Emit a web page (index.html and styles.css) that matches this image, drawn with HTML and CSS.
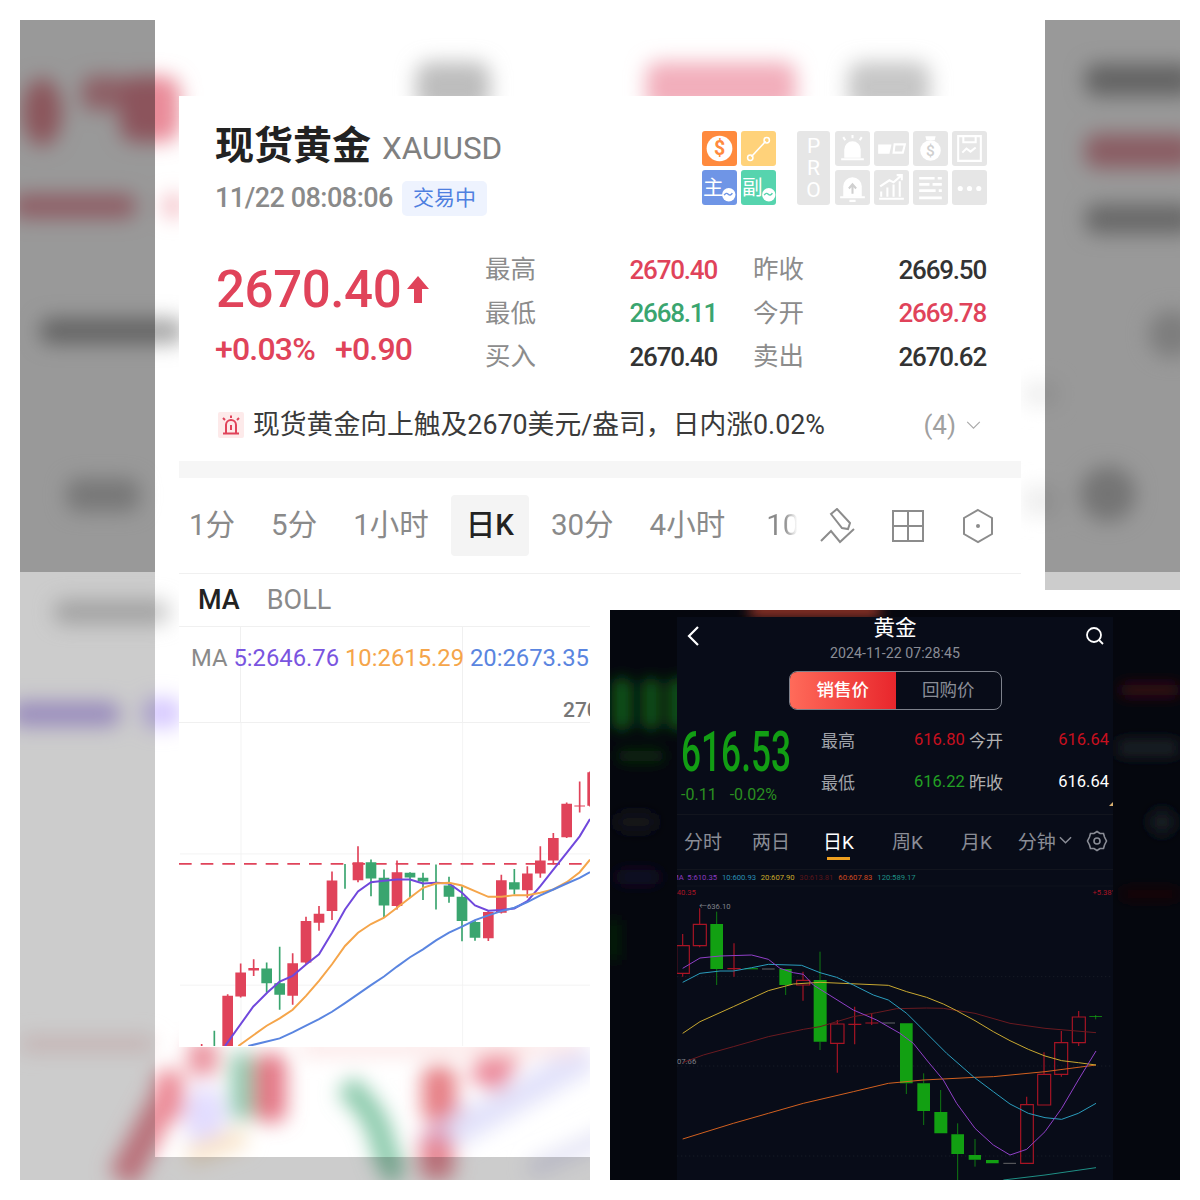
FILE: index.html

```html
<!DOCTYPE html>
<html lang="zh-CN">
<head>
  <meta charset="UTF-8" />
  <title>现货黄金 XAUUSD</title>
  <link rel="stylesheet" href="styles.css">
</head>
<body>
<div class="canvas">

  <!-- blurred, dimmed backdrop -->
  <svg class="backdrop" viewBox="0 0 1200 1200" aria-hidden="true">
    <defs>
      <filter id="smear" x="-10%" y="-10%" width="120%" height="120%"><feGaussianBlur stdDeviation="10"/></filter>
      <clipPath id="frame"><rect x="20" y="20" width="1160" height="1160"/></clipPath>
    </defs>
    <g clip-path="url(#frame)">
      <g filter="url(#smear)">
        <!-- top strip -->
        <rect x="416" y="62" width="74" height="50" rx="14" fill="#bdbdbd"/>
        <rect x="646" y="62" width="150" height="50" rx="12" fill="#f2aebb"/>
        <rect x="848" y="62" width="82" height="50" rx="14" fill="#c6c6c6"/>
        <!-- left side -->
        <ellipse cx="42" cy="112" rx="20" ry="34" fill="#e88e98"/>
        <rect x="82" y="76" width="44" height="34" rx="10" fill="#ec9fa9"/>
        <rect x="120" y="76" width="60" height="66" rx="16" fill="#e98b99"/>
        <rect x="12" y="194" width="124" height="24" rx="10" fill="#ec9aa6"/>
        <rect x="164" y="194" width="18" height="24" rx="8" fill="#f3b6be"/>
        <rect x="40" y="318" width="144" height="26" rx="10" fill="#a8a8a8"/>
        <rect x="66" y="478" width="74" height="34" rx="12" fill="#c8c8c8"/>
        <rect x="54" y="600" width="116" height="24" rx="10" fill="#cbcbcb"/>
        <rect x="10" y="702" width="110" height="24" rx="10" fill="#bdaceb"/>
        <rect x="142" y="698" width="40" height="30" rx="12" fill="#d6c8ff"/>
        <rect x="20" y="1036" width="135" height="16" rx="6" fill="#f5e0e0"/>
        <!-- right side -->
        <rect x="1085" y="64" width="110" height="32" rx="12" fill="#a6a6a6"/>
        <rect x="1085" y="134" width="110" height="34" rx="12" fill="#e69aa4"/>
        <rect x="1085" y="204" width="110" height="30" rx="12" fill="#aeaeae"/>
        <circle cx="1172" cy="334" r="24" fill="#d0d0d0"/>
        <circle cx="1108" cy="494" r="28" fill="#c2c2c2"/>
        <!-- bottom strip -->
        <path d="M168 1095 122 1180" stroke="#e88c98" stroke-width="30" fill="none"/>
        <rect x="154" y="1070" width="30" height="50" rx="10" fill="#ec8c98"/>
        <rect x="188" y="1040" width="30" height="36" rx="10" fill="#ea919d"/>
        <rect x="230" y="1052" width="24" height="68" rx="8" fill="#92ccb2"/>
        <rect x="254" y="1054" width="32" height="68" rx="10" fill="#e47484"/>
        <ellipse cx="205" cy="1118" rx="20" ry="32" fill="#e2dcff"/>
        <path d="M345 1085Q375 1110 382 1140T400 1176" stroke="#86c8a8" stroke-width="24" fill="none"/>
        <path d="M470 1112 424 1150" stroke="#d09ac8" stroke-width="24" fill="none"/>
        <rect x="420" y="1136" width="34" height="44" rx="10" fill="#e68692"/>
        <rect x="422" y="1066" width="34" height="56" rx="10" fill="#e67e84"/>
        <path d="M505 1048 484 1086" stroke="#ec889a" stroke-width="36" fill="none"/>
        <path d="M590 1055 450 1135" stroke="#e2e2fa" stroke-width="30" fill="none"/>
        <path d="M188 1156 245 1136" stroke="#f9e4c8" stroke-width="20" fill="none"/>
        <rect x="300" y="1040" width="280" height="16" fill="#fce6e6"/>
        <path d="M620 1130 530 1170" stroke="#e2e2f4" stroke-width="16" fill="none"/>
        <!-- pale smudges beside the card -->
        <rect x="1024" y="382" width="34" height="24" fill="#efefef"/>
        <rect x="1024" y="486" width="34" height="30" fill="#eeeeee"/>
      </g>
      <path class="shade-dark" d="M20 20H155V572H20ZM1045 20H1180V572H1045Z"/>
      <path class="shade-light" d="M20 572H155V1157H590V1180H20ZM1045 572H1180V590H1045Z"/>
    </g>
  </svg>

  <!-- light quote card -->
  <section class="quote-card">
    <header class="quote-head">
      <div>
        <div class="title-row">
          <h1>现货黄金</h1>
          <span class="symbol">XAUUSD</span>
        </div>
        <div class="time-row">
          <span class="time">11/22 08:08:06</span>
          <span class="badge">交易中</span>
        </div>
      </div>
      <div class="tool-icons">
        <div class="icon-grid">
          <svg class="tile tile-orange" viewBox="0 0 34 34"><circle cx="17" cy="17" r="12.5" fill="#fff"/><text x="17" y="23" class="tile-dollar">$</text></svg>
          <svg class="tile tile-yellow" viewBox="0 0 34 34"><path d="M10 25 24 10" stroke="#fff" stroke-width="1.6"/><circle cx="9" cy="26" r="2.6" class="ring"/><circle cx="25" cy="9" r="2.6" class="ring"/></svg>
          <svg class="tile tile-blue" viewBox="0 0 34 34"><text x="1" y="24" class="tile-char">主</text><circle cx="26" cy="24" r="6.500" fill="#fff"/><path d="M21.500 24.500q2-3 4-1t4-1" class="wave"/></svg>
          <svg class="tile tile-teal" viewBox="0 0 34 34"><text x="1" y="24" class="tile-char">副</text><circle cx="27" cy="24" r="6.500" fill="#fff"/><path d="M22.500 24.500q2-3 4-1t4-1" class="wave-teal"/></svg>
        </div>
        <div class="pro-grid">
          <div class="pro-tile"><span>P</span><span>R</span><span>O</span></div>
          <svg class="tile tile-gray" viewBox="0 0 34 34"><path d="M9 26V18a8 8 0 0 1 16 0v8zM6 27.500h22" class="fill-white"/><path d="M6 27.500h22M17 4v3M8 6l2 3M26 6l-2 3" class="line-white"/></svg>
          <svg class="tile tile-gray" viewBox="0 0 34 34"><path d="M4 13h13l-2 9H4z" fill="#fff"/><path d="M20 13h10l-2 8h-9z" class="line-white"/></svg>
          <svg class="tile tile-gray" viewBox="0 0 34 34"><circle cx="17" cy="19" r="10" fill="#fff"/><path d="M13 9l-1-4h10l-1 4z" fill="#fff"/><text x="17" y="24" class="tile-money">$</text></svg>
          <svg class="tile tile-gray" viewBox="0 0 34 34"><path d="M6 5h22v24H6z" class="line-white"/><path d="M11 5v6h12V5" class="line-white"/><path d="M10 21l4-4 4 3 5-4" class="line-white"/></svg>
          <svg class="tile tile-gray" viewBox="0 0 34 34"><path d="M8 26V16a9 9 0 0 1 18 0v10z" fill="#fff"/><path d="M5 26.500h24M14 30h6" class="line-white"/><path d="M17 23v-8M13.500 18l3.500-4 3.500 4" class="line-gray"/></svg>
          <svg class="tile tile-gray" viewBox="0 0 34 34"><path d="M5 28h24M7 26v-5M13 26v-9M19 26v-12M25 26v-15M6 16l9-6 4 2 8-7M22 5h5v5" class="line-white"/></svg>
          <svg class="tile tile-gray" viewBox="0 0 34 34"><path d="M6 8h15M24 8h4M6 14h10M19 14h9M6 20h16M25 20h3M6 27h22" class="line-white-thick"/></svg>
          <svg class="tile tile-gray" viewBox="0 0 34 34"><circle cx="8" cy="18" r="2.500" fill="#fff"/><circle cx="17" cy="18" r="2.500" fill="#fff"/><circle cx="26" cy="18" r="2.500" fill="#fff"/></svg>
        </div>
      </div>
    </header>

    <div class="quote-main">
      <div class="price-block">
        <div class="price-row">
          <span class="price">2670.40</span>
          <svg class="price-arrow" viewBox="0 0 22 27"><path d="M11 0 22 13H15V27H7V13H0Z"/></svg>
        </div>
        <div class="change-row"><span>+0.03%</span><span>+0.90</span></div>
      </div>
      <div class="stat-grid">
        <div class="stat"><span>最高</span><b class="up">2670.40</b></div>
        <div class="stat"><span>昨收</span><b>2669.50</b></div>
        <div class="stat"><span>最低</span><b class="down">2668.11</b></div>
        <div class="stat"><span>今开</span><b class="up">2669.78</b></div>
        <div class="stat"><span>买入</span><b>2670.40</b></div>
        <div class="stat"><span>卖出</span><b>2670.62</b></div>
      </div>
    </div>

    <div class="alert-row">
      <svg class="alert-icon" viewBox="0 0 26 26"><rect width="26" height="26" rx="2" fill="#fdeaea"/><path d="M8 21V13a5 5 0 0 1 10 0v8M5 21.500h16M13 13v5M13 3.500v2.500M5 6l2 2M21 6l-2 2" fill="none" stroke="#e0435a" stroke-width="2"/></svg>
      <span class="alert-text">现货黄金向上触及2670美元/盎司，日内涨0.02%</span>
      <span class="alert-count">(4)</span>
      <svg class="alert-chevron" viewBox="0 0 16 10"><path d="M1 1 8 8 15 1" fill="none" stroke="#aaa" stroke-width="1.300"/></svg>
    </div>

    <div class="band"></div>

    <nav class="period-row">
      <div class="period-tabs">
        <span class="tab">1分</span>
        <span class="tab">5分</span>
        <span class="tab">1小时</span>
        <span class="tab tab-active">日K</span>
        <span class="tab">30分</span>
        <span class="tab">4小时</span>
        <span class="tab tab-fade">10</span>
      </div>
      <div class="period-tools">
        <svg viewBox="0 0 36 36"><path d="M11 5 17 0 30 14 28 20 22 19ZM1 32 11 22 20 33 34 20" transform="translate(0 1)" fill="none" stroke="#8c8c8c" stroke-width="2"/></svg>
        <svg viewBox="0 0 36 36"><path d="M3 3H33V33H3ZM18 3V33M3 18H33" fill="none" stroke="#8c8c8c" stroke-width="2"/></svg>
        <svg viewBox="0 0 36 36"><path d="M18 2 32 10V26L18 34 4 26V10Z" fill="none" stroke="#8c8c8c" stroke-width="2"/><circle cx="18" cy="18" r="2" fill="#8c8c8c"/></svg>
      </div>
    </nav>

    <div class="indicator-row"><b>MA</b><span>BOLL</span></div>

    <div class="plot">
      <div class="ma-legend">
        <p><span class="ma-gray">MA</span> <span class="ma-purple">5:2646.76</span> <span class="ma-orange">10:2615.29</span> <span class="ma-blue">20:2673.35</span></p>
        <span class="axis-label">2700</span>
      </div>
      <svg class="candles" viewBox="-3 -21 1233 972" preserveAspectRatio="none">
        <path d="M183-21V951M848-21V951" class="grid-line"/>
        <path d="M0 373H1230M0 768H1230" class="grid-line"/>
        <path d="M-3 403H1230" class="last-price"/>
        <path d="M65 945V951M143 795V951M182 703V805M221 690V740M338 672V827M378 562V705M417 530V604M456 426V572M534 350V458M651 393V540M925 545V635M964 436V552M1042 410V505M1081 350V445M1120 310V405M1160 218V325M1199 155V248M1230 125V230" class="wick-up"/>
        <path d="M127 800h32v151h-32zM166 730h32v72h-32zM205 716h32v8h-32zM322 702h32v98h-32zM362 575h32v125h-32zM401 553h32v27h-32zM440 453h32v92h-32zM518 398h32v54h-32zM635 428h32v102h-32zM909 548h32v79h-32zM948 452h32v98h-32zM1026 432h32v50h-32zM1065 393h32v39h-32zM1104 325h32v68h-32zM1144 222h32v101h-32zM1183 227h32v3h-32zM1222 127h16v101h-16z" class="body-up"/>
        <path d="M103 905V951M260 700V790M299 652V842M495 403V478M573 390V500M612 420V563M690 428V505M729 430V512M768 405V540M807 442V520M846 470V636M885 575V634M1003 418V495" class="wick-down"/>
        <path d="M244 718h32v44h-32zM283 762h32v35h-32zM557 398h32v49h-32zM596 445h32v83h-32zM674 430h32v14h-32zM713 445h32v11h-32zM791 468h32v34h-32zM830 502h32v73h-32zM869 578h32v47h-32zM987 458h32v22h-32z" class="body-down"/>
        <polyline class="ma-line ma5" points="135,951 220,832 262,790 299,757 338,740 378,706 417,675 456,610 495,540 534,486 573,458 612,454 651,450 690,450 729,462 768,460 807,462 846,490 885,528 925,544 964,542 1003,537 1042,515 1081,470 1120,420 1160,370 1199,320 1230,268"/>
        <polyline class="ma-line ma10" points="175,951 260,890 299,868 338,842 378,800 417,755 456,705 495,650 534,610 573,584 612,565 651,535 690,505 729,475 768,462 807,460 846,468 885,485 925,502 964,502 1003,497 1042,497 1081,490 1120,480 1160,458 1199,428 1230,390"/>
        <polyline class="ma-line ma20" points="205,951 299,928 338,910 378,890 417,870 456,848 495,822 534,795 573,768 612,742 651,712 690,684 729,660 768,633 807,610 846,592 885,572 925,558 964,545 1003,535 1042,518 1081,498 1120,480 1160,462 1199,445 1230,428"/>
      </svg>
    </div>
  </section>

  <!-- dark gold quote screenshot -->
  <aside class="dark-frame">
    <div class="dark-shot">
      <svg class="dark-smear" viewBox="0 0 570 570" aria-hidden="true">
        <defs><filter id="smear-dark" x="-20%" y="-20%" width="140%" height="140%"><feGaussianBlur stdDeviation="7"/></filter></defs>
        <g filter="url(#smear-dark)">
          <rect x="140" y="-6" width="130" height="12" fill="#b9402e"/>
          <rect x="2" y="68" width="20" height="52" rx="8" fill="#0d5216"/>
          <rect x="32" y="68" width="18" height="52" rx="8" fill="#0d5216"/>
          <rect x="58" y="68" width="20" height="52" rx="8" fill="#0d5216"/>
          <rect x="8" y="140" width="46" height="12" rx="5" fill="#0a2e10"/>
          <rect x="6" y="203" width="40" height="18" rx="8" fill="#16181e"/>
          <rect x="6" y="260" width="44" height="14" rx="6" fill="#15102a"/>
          <rect x="510" y="74" width="60" height="12" rx="5" fill="#3e0d14"/>
          <rect x="506" y="130" width="64" height="16" rx="6" fill="#1f2126"/>
          <circle cx="552" cy="212" r="13" fill="#191b21"/>
          <rect x="510" y="280" width="60" height="8" rx="4" fill="#240a0f"/>
          <rect x="0" y="310" width="8" height="40" fill="#0a2c10"/>
        </g>
      </svg>
      <div class="dark-inner">
        <header class="dark-top">
          <svg class="dark-back" viewBox="0 0 14 22"><path d="M12 2 3 11 12 20" fill="none" stroke="#fff" stroke-width="2.200"/></svg>
          <div class="dark-title">
            <strong>黄金</strong>
            <span>2024-11-22 07:28:45</span>
          </div>
          <svg class="dark-search" viewBox="0 0 20 20"><circle cx="9" cy="9" r="7" fill="none" stroke="#fff" stroke-width="1.800"/><path d="M14 14 18 18" stroke="#fff" stroke-width="1.800"/></svg>
        </header>
        <div class="segment">
          <span class="segment-on">销售价</span>
          <span>回购价</span>
        </div>
        <div class="dark-quote">
          <div class="dark-price">
            <span class="dark-big">616.53</span>
            <div class="dark-change"><span>-0.11</span><span>-0.02%</span></div>
          </div>
          <div class="dark-stats">
            <span class="dark-label">最高</span><span class="dark-red">616.80</span><span class="dark-label2">今开</span><span class="dark-value dark-red">616.64</span>
            <span class="dark-label">最低</span><span class="dark-green">616.22</span><span class="dark-label2">昨收</span><span class="dark-value dark-white">616.64</span>
          </div>
          <i class="corner-mark"></i>
        </div>
        <nav class="dark-tabs">
          <span>分时</span>
          <span>两日</span>
          <span class="dark-tab-on">日K</span>
          <span>周K</span>
          <span>月K</span>
          <span class="dark-tab-min">分钟<svg viewBox="0 0 14 9"><path d="M1 1 7 7 13 1" fill="none" stroke="#8a8d96" stroke-width="1.600"/></svg></span>
          <svg class="dark-gear" viewBox="0 0 22 22"><path d="M11 1.500 14 3.500 17.500 3.500 18.500 7 20.500 11 18.500 15 17.500 18.500 14 18.500 11 20.500 8 18.500 4.500 18.500 3.500 15 1.500 11 3.500 7 4.500 3.500 8 3.500Z" fill="none" stroke="#8a8d96" stroke-width="1.600"/><circle cx="11" cy="11" r="3" fill="none" stroke="#8a8d96" stroke-width="1.600"/></svg>
        </nav>
        <svg class="dark-chart" viewBox="21 0 1308 930" preserveAspectRatio="none">
          <text y="31" class="dark-legend"><tspan x="6" class="l-purple">MA</tspan><tspan x="52" class="l-purple">5:610.35</tspan><tspan x="156" class="l-cyan">10:600.93</tspan><tspan x="272" class="l-yellow">20:607.90</tspan><tspan x="388" class="l-maroon">30:613.81</tspan><tspan x="505" class="l-orange">60:607.83</tspan><tspan x="622" class="l-teal">120:589.17</tspan></text>
          <path d="M21 48H1329" class="dark-rule"/>
          <path d="M21 320H1329M21 588H1329M21 858H1329" class="dark-dots"/>
          <text x="20" y="75" class="dark-axis dark-axis-red">40.35</text>
          <text x="1329" y="75" class="dark-axis dark-axis-red dark-end">+5.38'</text>
          <text x="88" y="118" class="dark-axis dark-axis-gray">←636.10</text>
          <text x="21" y="582" class="dark-axis dark-axis-gray">07.66</text>

          <path d="M20 227h38v83h-38zM38 192v35M38 310v10M70 163h39v64h-39zM89 115v48M89 227v5M172 296h40M192 220v100M380 331h39v14h-39zM399 305v26M399 345v47M482 462h40v58h-40zM502 450v12M502 520v88M535 463h39M554 410v113M586 459h39M605 430v35M1052 704h38v176h-38zM1070 680v24M1103 613h39v92h-39zM1122 547v66M1154 518h39v95h-39zM1174 483v35M1174 613v7M1207 441h39v77h-39zM1226 423v18M1226 518v10" class="d-up"/>
          <path d="M140 125v37M140 297v48M347 345v30M450 245v85M450 515v25M709 640v32M761 610v30M761 723v42M812 660v66M863 760v33M863 852v78M915 807v48M915 869v21M1277 435v13" class="d-wick-down"/>
          <path d="M121 162h38v135h-38zM328 297h37v48h-37zM431 330h39v185h-39zM690 460h38v180h-38zM742 640h38v83h-38zM793 726h39v64h-39zM844 793h38v59h-38zM896 855h37v14h-37zM948 870h38v10h-38zM224 295h40v3h-40zM1258 439h38v2h-38z" class="d-down"/>
          <path d="M276 297h38M637 459h38M1000 880h38" class="d-doji"/>

          <polyline class="d-line d-maroon" points="38,578 100,555 190,530 295,500 400,478 450,470 550,440 620,428 680,416 770,414 820,415 915,430 1020,460 1125,475 1278,488"/>
          <polyline class="d-line d-orange" points="38,807 190,760 295,730 400,700 550,665 655,640 760,630 915,622 970,620 1125,605 1278,585"/>
          <polyline class="d-line d-teal" points="1000,930 1125,915 1278,893"/>
          <polyline class="d-line d-yellow" points="38,490 90,455 190,410 295,362 370,342 450,337 655,346 710,365 770,382 820,402 860,422 915,452 970,485 1020,512 1075,538 1125,558 1175,572 1225,578 1278,585"/>
          <polyline class="d-line d-cyan" points="38,337 90,310 150,303 190,303 245,293 295,283 395,286 450,308 500,322 550,345 610,375 655,390 710,430 770,490 830,550 910,620 970,665 1020,702 1075,730 1125,743 1175,748 1225,730 1278,700"/>
          <polyline class="d-line d-purple" points="38,295 90,264 150,258 245,255 295,268 330,295 370,308 400,313 430,345 470,370 550,420 620,450 690,490 730,520 770,570 820,630 860,700 915,775 970,825 1020,855 1070,838 1125,785 1175,715 1225,630 1278,543"/>
        </svg>
      </div>
    </div>
  </aside>
</div>
</body>
</html>
```

FILE: styles.css

```css
* { margin: 0; padding: 0; box-sizing: border-box; }
body { background: #fff; font-family: Roboto, "Noto Sans CJK SC", sans-serif; color: #333; }
.canvas { position: relative; width: 1200px; height: 1200px; overflow: hidden; }
svg { display: block; }

/* backdrop */
.backdrop { position: absolute; left: 0; top: 0; width: 1200px; height: 1200px; }
.shade-dark { fill: #999; mix-blend-mode: multiply; }
.shade-light { fill: #ccc; mix-blend-mode: multiply; }

/* light card */
.quote-card { position: absolute; left: 179px; top: 96px; width: 842px; height: 951px; background: #fff; }
.quote-head { height: 151px; padding: 25px 34px 0 36px; display: flex; justify-content: space-between; }
.title-row { display: flex; align-items: center; gap: 11px; height: 50px; }
h1 { font-size: 39px; font-weight: 700; color: #222; line-height: 50px; }
.symbol { font-size: 31.500px; color: #808080; padding-top: 5px; }
.time-row { display: flex; align-items: center; gap: 9px; height: 44px; margin-top: 5px; }
.time { font-size: 27px; font-weight: 500; color: #8a8a8a; letter-spacing: -0.5px; }
.badge { width: 85px; height: 35px; line-height: 34px; text-align: center; background: #eef3fe; border-radius: 5px; color: #4e7fe0; font-size: 21px; }

.tool-icons { display: flex; gap: 21px; padding-top: 10px; }
.icon-grid { display: grid; grid-template-columns: repeat(2, 35px); grid-auto-rows: 35px; gap: 4px; }
.pro-grid { display: grid; grid-template-columns: 34px repeat(4, 35px); grid-auto-rows: 35px; gap: 4px; }
.tile { width: 35px; height: 35px; border-radius: 3px; }
.tile-orange { background: #ff8a3d; }
.tile-yellow { background: #ffd27a; }
.tile-blue { background: #6f95e6; }
.tile-teal { background: #56d4ae; }
.tile-gray { background: #e6e6e6; }
.tile-dollar { font-size: 19px; font-weight: 700; fill: #ff8a3d; text-anchor: middle; }
.tile-money { font-size: 15px; font-weight: 500; fill: #d0d0d0; text-anchor: middle; }
.tile-char { font-size: 20px; fill: #fff; }
.ring { fill: none; stroke: #fff; stroke-width: 1.5; }
.wave { fill: none; stroke: #6f95e6; stroke-width: 1.4; }
.wave-teal { fill: none; stroke: #56d4ae; stroke-width: 1.4; }
.fill-white { fill: #fff; }
.line-white { fill: none; stroke: #fff; stroke-width: 2; }
.line-white-thick { fill: none; stroke: #fff; stroke-width: 2.6; }
.line-gray { fill: none; stroke: #d0d0d0; stroke-width: 2; }
.pro-tile { grid-row: span 2; width: 33px; background: #e6e6e6; border-radius: 3px; color: #fff; font-size: 21px; display: flex; flex-direction: column; align-items: center; justify-content: center; line-height: 21px; gap: 1px; }

.quote-main { height: 142px; padding-left: 37px; display: flex; }
.price-block { width: 269px; }
.price-row { height: 82px; display: flex; align-items: center; gap: 6px; }
.price { font-size: 51px; font-weight: 500; color: #e0435a; letter-spacing: -0.4px; position: relative; top: 1px; }
.price-arrow { width: 22px; height: 27px; fill: #e0435a; margin-top: 2px; }
.change-row { height: 40px; display: flex; align-items: center; gap: 20px; font-size: 32px; font-weight: 500; color: #e0435a; letter-spacing: -0.8px; margin-left: -1px; }
.stat-grid { display: grid; grid-template-columns: 232px 233px; column-gap: 36px; grid-auto-rows: 43.5px; }
.stat { display: flex; justify-content: space-between; align-items: center; font-size: 25.500px; color: #8c8c8c; }
.stat span { line-height: 1; margin-top: 2px; }
.stat b { font-size: 26px; font-weight: 500; color: #333; letter-spacing: -1.2px; padding-top: 2px; }
.stat b.up { color: #e0435a; }
.stat b.down { color: #3aa56f; }

.alert-row { height: 72px; padding-left: 39px; padding-right: 40px; display: flex; align-items: center; }
.alert-icon { width: 26px; height: 26px; margin-right: 9px; }
.alert-text { flex: 1; font-size: 26.800px; color: #3a3a3a; white-space: nowrap; line-height: 1; }
.alert-count { font-size: 26px; color: #a0a0a0; margin-right: 10px; }
.alert-chevron { width: 15px; height: 9px; }

.band { height: 17px; background: #f6f6f6; }

.period-row { height: 96px; display: flex; align-items: center; border-bottom: 1px solid #f0f0f0; padding-right: 25px; }
.period-tabs { flex: 1; display: flex; align-items: center; gap: 6px; margin-left: -5px; overflow: hidden; white-space: nowrap; }
.tab { padding: 0 15px; height: 61px; line-height: 60px; font-size: 29.500px; color: #8a8a8a; }
.tab-active { background: #f4f4f4; border-radius: 4px; color: #222; font-weight: 500; margin: 0 1px; }
.tab-fade { background: linear-gradient(90deg, #8a8a8a 55%, #fff 95%); background-clip: text; -webkit-background-clip: text; color: transparent; padding: 0; margin-left: 20px; }
.period-tools { display: flex; gap: 34px; }
.period-tools svg { width: 36px; height: 36px; }

.indicator-row { height: 53px; padding-left: 19px; display: flex; align-items: center; gap: 27px; font-size: 27px; color: #8a8a8a; border-bottom: 1px solid #f0f0f0; }
.indicator-row b { font-weight: 500; color: #222; }

.plot { width: 411px; overflow: hidden; }
.ma-legend { position: relative; height: 96px; padding: 13px 0 0 12px; border-bottom: 1px solid #f0f0f0; background-image: linear-gradient(#f0f0f0, #f0f0f0), linear-gradient(#f0f0f0, #f0f0f0); background-size: 1px 100%; background-position: 61px 0, 283px 0; background-repeat: no-repeat; }
.ma-legend p { font-size: 23.800px; white-space: nowrap; line-height: 36px; }
.ma-gray { color: #8a8a8a; }
.ma-purple { color: #7a55e0; }
.ma-orange { color: #f5a54a; }
.ma-blue { color: #5a85e0; }
.axis-label { position: absolute; left: 384px; top: 71px; font-size: 21px; font-weight: 500; color: #777; }
.candles { width: 411px; height: 323px; }
.grid-line { fill: none; stroke: #f0f0f0; stroke-width: 2.5; }
.last-price { fill: none; stroke: #e0435a; stroke-width: 5; stroke-dasharray: 38 27; }
.wick-up { fill: none; stroke: #e0435a; stroke-width: 5; }
.body-up { fill: #e0435a; }
.wick-down { fill: none; stroke: #3aa56f; stroke-width: 5; }
.body-down { fill: #3aa56f; }
.ma-line { fill: none; stroke-width: 6; }
.ma5 { stroke: #7048dc; }
.ma10 { stroke: #f5a54a; }
.ma20 { stroke: #5a85e0; }

/* dark screenshot */
.dark-frame { position: absolute; left: 590px; top: 590px; width: 610px; height: 610px; padding: 20px; background: #fff; }
.dark-shot { position: relative; width: 570px; height: 570px; background: #05070e; overflow: hidden; }
.dark-smear { position: absolute; left: 0; top: 0; width: 570px; height: 570px; }
.dark-inner { position: absolute; left: 67px; top: 7px; width: 436px; height: 563px; background: #080c18; overflow: hidden; color: #8a8d96; }
.dark-top { height: 54px; display: flex; justify-content: space-between; align-items: flex-start; padding: 0 8px 0 9px; }
.dark-back { width: 14px; height: 22px; margin-top: 8px; }
.dark-title { display: flex; flex-direction: column; align-items: center; margin-left: 5px; }
.dark-title strong { font-size: 21.500px; font-weight: 400; color: #fff; line-height: 22px; }
.dark-title span { font-size: 14.200px; margin-top: 4px; line-height: 20px; }
.dark-search { width: 20px; height: 20px; margin-top: 9px; }
.segment { margin: 0 0 0 112px; width: 213px; height: 39px; border: 1px solid #7d818b; border-radius: 8px; display: flex; overflow: hidden; font-size: 17.500px; line-height: 37px; text-align: center; }
.segment span { width: 50%; }
.segment .segment-on { background: linear-gradient(90deg, #ff6b5a, #e8262c); color: #fff; font-weight: 500; }

.dark-quote { position: relative; height: 104px; margin-top: 1px; padding-left: 4px; display: flex; border-bottom: 1px solid #12151e; }
.dark-price { width: 140px; }
.dark-big { display: block; font-size: 56px; font-weight: 500; color: #129e14; line-height: 70px; height: 66px; transform: scaleX(0.63); transform-origin: left; white-space: nowrap; margin-top: 6px; }
.dark-change { display: flex; gap: 13px; font-size: 16px; color: #2a8f20; margin-top: 2px; }
.dark-stats { display: grid; grid-template-columns: 93px 51px 38px 106px; grid-auto-rows: 42px; align-items: center; margin-top: 7px; font-size: 16.500px; }
.dark-label { color: #a0a3a9; font-size: 17px; }
.dark-label2 { color: #b0b0b0; font-size: 17px; padding-left: 4px; white-space: nowrap; }
.dark-value { text-align: right; }
.dark-red { color: #c8101f; }
.dark-green { color: #23a024; }
.dark-white { color: #fff; }
.corner-mark { position: absolute; right: 0; bottom: 8px; border-left: 4px solid transparent; border-bottom: 4px solid #d8b070; }

.dark-tabs { position: relative; height: 55px; display: flex; align-items: center; font-size: 19px; border-bottom: 1px solid #12151e; padding: 0 0 4px 7px; }
.dark-tabs span { margin-right: 38px; white-space: nowrap; }
.dark-tabs span:first-child { margin-right: 30px; }
.dark-tabs span:nth-child(2) { margin-right: 33px; }
.dark-tabs span:nth-child(5) { margin-right: 26px; }
.dark-tabs .dark-tab-on { color: #fff; position: relative; }
.dark-tab-on::after { content: ""; position: absolute; left: 4px; bottom: -6px; width: 23px; height: 2.500px; background: #f0a020; }
.dark-tabs .dark-tab-min { display: flex; align-items: center; gap: 3px; margin-right: 0; }
.dark-tab-min svg { width: 13px; height: 9px; }
.dark-gear { position: absolute; left: 409px; top: 15px; width: 22px; height: 22px; }

.dark-chart { width: 436px; height: 310px; }
.dark-legend { font-size: 23px; }
.l-purple { fill: #8a3ac0; }
.l-cyan { fill: #2a8fb5; }
.l-yellow { fill: #c9a92a; }
.l-maroon { fill: #5a1418; }
.l-orange { fill: #d24a20; }
.l-teal { fill: #1f8f85; }
.dark-rule { fill: none; stroke: #12151e; stroke-width: 2; }
.dark-dots { fill: none; stroke: #20242d; stroke-width: 2; stroke-dasharray: 4 8; }
.dark-axis { font-size: 23px; }
.dark-axis-red { fill: #a81424; }
.dark-axis-gray { fill: #80838a; }
.dark-end { text-anchor: end; }
.d-up { fill: none; stroke: #a81424; stroke-width: 3.500; }
.d-wick-down { fill: none; stroke: #0f7a12; stroke-width: 3; }
.d-down { fill: #12a012; }
.d-doji { fill: none; stroke: #777; stroke-width: 2.500; }
.d-line { fill: none; stroke-width: 3; }
.d-maroon { stroke: #6a1a20; }
.d-orange { stroke: #d2601f; }
.d-teal { stroke: #1f8f85; }
.d-yellow { stroke: #c8a830; }
.d-cyan { stroke: #2a9dbd; }
.d-purple { stroke: #9040c8; }
```
